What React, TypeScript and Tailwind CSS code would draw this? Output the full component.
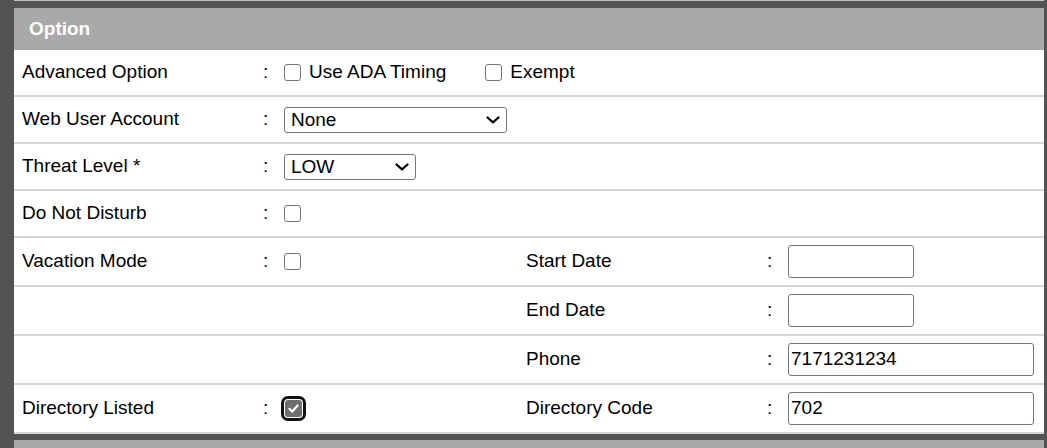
import { ReactNode } from "react"

const font = { fontFamily: '"Liberation Sans", Arial, sans-serif' }

function Box() {
  return <span className="inline-block h-[17px] w-[17px] shrink-0 rounded-[3px] border border-[#767676] bg-white" />
}

function CheckedBox() {
  return (
    <span className="ml-[1px] inline-flex h-[17px] w-[17px] shrink-0 items-center justify-center rounded-[3px] bg-[#6e6e6e] outline-[3px] outline-solid outline-[#111] outline-offset-[1px]">
      <svg width="13" height="13" viewBox="0 0 12 12" fill="none">
        <path d="M2.2 6.3 L4.8 8.8 L9.8 3.2" stroke="#fff" strokeWidth="2" strokeLinecap="round" strokeLinejoin="round" />
      </svg>
    </span>
  )
}

function Select({ value, width }: { value: string; width: string }) {
  return (
    <div className={`flex h-[26px] ${width} items-center justify-between rounded-[3px] border border-[#767676] bg-white pl-[6px] pr-[6px]`}>
      <span className="leading-none">{value}</span>
      <svg width="14" height="8" viewBox="0 0 14 8" fill="none">
        <path d="M1.5 1.5 L7 6.3 L12.5 1.5" stroke="#000" strokeWidth="2.2" strokeLinecap="round" strokeLinejoin="round" />
      </svg>
    </div>
  )
}

function TextBox({ value, width }: { value?: string; width: string }) {
  return (
    <div className={`flex h-[33px] ${width} items-center rounded-[3px] border border-[#767676] bg-white pl-[2px]`}>
      {value}
    </div>
  )
}

function Row({
  label,
  value,
  rLabel,
  rValue,
  tall,
}: {
  label?: string
  value?: ReactNode
  rLabel?: string
  rValue?: ReactNode
  tall?: boolean
}) {
  return (
    <div className={`flex ${tall ? "h-[49px]" : "h-[47px]"} items-center border-b-2 border-[#d6d6d6] bg-white`}>
      <div className="w-[244px] shrink-0 pl-2">{label}</div>
      <div className="w-[26px] shrink-0 pl-[5px]">{label ? ":" : ""}</div>
      <div className="flex w-[234px] shrink-0 items-center whitespace-nowrap">{value}</div>
      {rLabel && (
        <>
          <div className="w-[243px] shrink-0 pl-2">{rLabel}</div>
          <div className="w-[27px] shrink-0 pl-[6px]">:</div>
          <div className="flex flex-1 items-center pr-[10px]">{rValue}</div>
        </>
      )}
    </div>
  )
}

export default function App() {
  return (
    <div className="h-[448px] overflow-hidden bg-[#535353] pl-[14px] pr-[3px] text-[19px] text-black" style={font}>
      <div className="h-px bg-[#c4c4c4]" />
      <div className="mt-[7px] flex h-[42px] items-center bg-[#a9a9a9] pl-[15px] font-bold text-white">
        Option
      </div>

      <Row
        label="Advanced Option"
        value={
          <div className="flex items-center">
            <Box />
            <span className="ml-2">Use ADA Timing</span>
            <span className="ml-[39px] flex"><Box /></span>
            <span className="ml-2">Exempt</span>
          </div>
        }
      />
      <Row label="Web User Account" value={<Select value="None" width="w-[223px]" />} />
      <Row label="Threat Level *" value={<Select value="LOW" width="w-[132px]" />} />
      <Row label="Do Not Disturb" value={<Box />} />
      <Row
        tall
        label="Vacation Mode"
        value={<Box />}
        rLabel="Start Date"
        rValue={<TextBox width="w-[126px]" />}
      />
      <Row tall rLabel="End Date" rValue={<TextBox width="w-[126px]" />} />
      <Row tall rLabel="Phone" rValue={<TextBox value="7171231234" width="w-[246px]" />} />
      <Row
        tall
        label="Directory Listed"
        value={<CheckedBox />}
        rLabel="Directory Code"
        rValue={<TextBox value="702" width="w-[246px]" />}
      />

      <div className="mt-[6px] h-[40px] bg-[#a9a9a9]" />
    </div>
  )
}
